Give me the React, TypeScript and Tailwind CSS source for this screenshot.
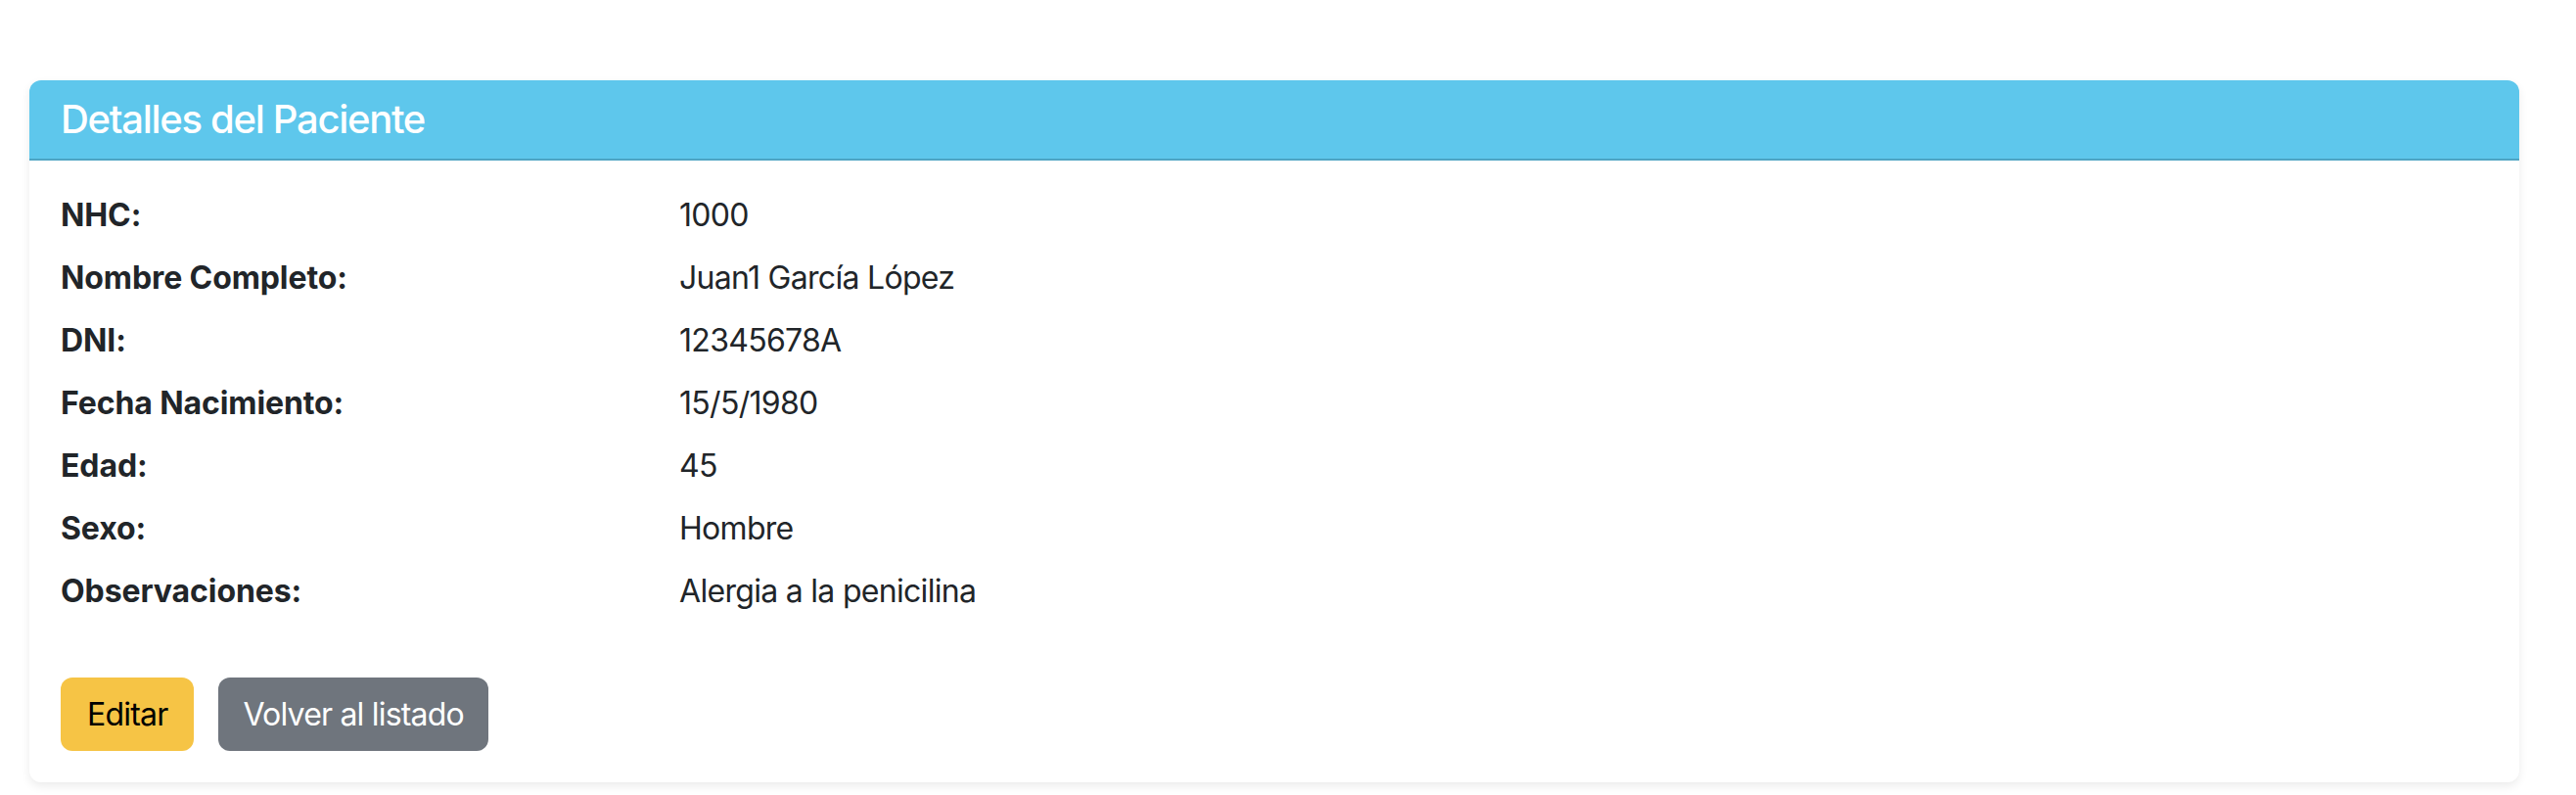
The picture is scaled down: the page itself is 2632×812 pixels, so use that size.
import React from "react";

const rows: [string, string][] = [
  ["NHC:", "1000"],
  ["Nombre Completo:", "Juan1 García López"],
  ["DNI:", "12345678A"],
  ["Fecha Nacimiento:", "15/5/1980"],
  ["Edad:", "45"],
  ["Sexo:", "Hombre"],
  ["Observaciones:", "Alergia a la penicilina"],
];

export default function App() {
  return (
    <div
      className="min-h-[812px] bg-white pt-[82px] pl-[30px] pr-[58px] text-[#212529]"
      style={{ fontFamily: "Inter, 'Noto Sans', sans-serif" }}
    >
      <div className="overflow-hidden rounded-[12px] bg-white shadow-[0_4px_10px_rgba(0,0,0,0.08)]">
        <div className="border-b-2 border-[#4ea4c3] bg-[#5ec7ec] px-[32px] py-[16px]">
          <h5 className="text-[40px] font-medium leading-[48px] tracking-[-1.3px] text-white">
            Detalles del Paciente
          </h5>
        </div>
        <div className="p-[32px]">
          <dl className="flex flex-col gap-[16px]">
            {rows.map(([k, v]) => (
              <div key={k} className="flex text-[32px] leading-[48px]">
                <dt className="w-[632px] shrink-0 font-bold tracking-[-0.1px]">{k}</dt>
                <dd className="tracking-[-0.7px]">{v}</dd>
              </div>
            ))}
          </dl>
          <div className="mt-[64px] flex gap-[25px]">
            <button className="h-[75px] rounded-[12px] bg-[#f6c445] px-[27px] text-[32px] leading-[48px] tracking-[-0.8px] text-black">
              Editar
            </button>
            <button className="h-[75px] rounded-[12px] bg-[#6f757d] px-[25px] text-[32px] leading-[48px] tracking-[-0.8px] text-white">
              Volver al listado
            </button>
          </div>
        </div>
      </div>
    </div>
  );
}
